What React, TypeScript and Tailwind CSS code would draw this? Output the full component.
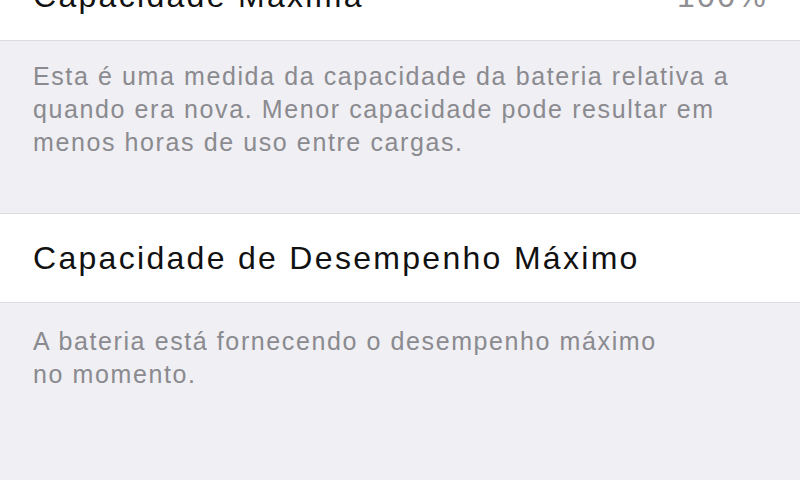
import React from 'react';

const font = { fontFamily: '"Liberation Sans", Arial, sans-serif' };

function Row({ title, value }: { title: string; value?: string }) {
  return (
    <div className="flex h-[90px] items-center justify-between border-y border-[#dcdce0] bg-white pl-[33px] pr-[32px]">
      <span className="text-[32px] tracking-[2.3px] text-[#111]">{title}</span>
      {value && <span className="text-[32px] tracking-[2.3px] text-[#8e8e93]">{value}</span>}
    </div>
  );
}

export default function App() {
  return (
    <div className="h-[480px] w-[800px] overflow-hidden bg-[#efeff4]" style={font}>
      <div className="-mt-[49px]">
        <Row title="Capacidade Máxima" value="100%" />
        <p className="px-[33px] pt-[19px] text-[25px] leading-[33px] tracking-[1.6px] text-[#8a8a8f]">
          Esta é uma medida da capacidade da bateria relativa a<br />
          quando era nova. Menor capacidade pode resultar em<br />
          menos horas de uso entre cargas.
        </p>
        <div className="h-[54px]" />
        <Row title="Capacidade de Desempenho Máximo" />
        <p className="px-[33px] pt-[22px] text-[25px] leading-[33px] tracking-[1.6px] text-[#8a8a8f]">
          A bateria está fornecendo o desempenho máximo<br />
          no momento.
        </p>
      </div>
    </div>
  );
}
